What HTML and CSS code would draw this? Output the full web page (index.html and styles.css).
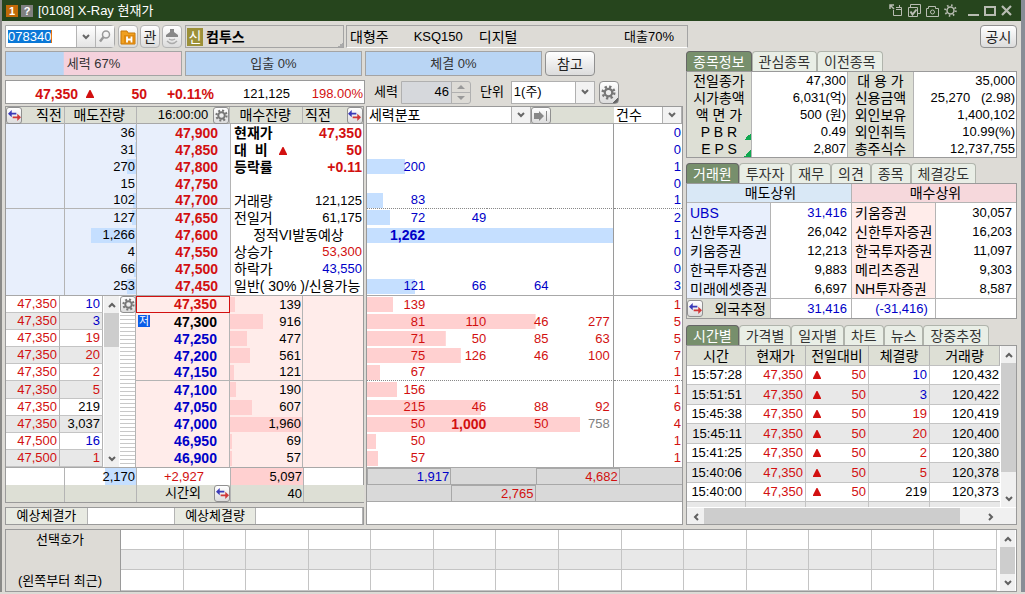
FILE: index.html
```html
<!DOCTYPE html>
<html lang="ko">
<head>
  <meta charset="UTF-8">
  <meta name="viewport" content="width=device-width, initial-scale=1.0">
  <title>[0108] X-Ray 현재가</title>
  <link rel="stylesheet" href="styles.css">
</head>
<body>

<!-- 공용 아이콘 -->
<svg class="defs" width="0" height="0">
  <symbol id="gear" viewBox="0 0 16 16">
    <circle cx="8" cy="8" r="6.2" fill="none" stroke="currentColor" stroke-width="2.6" stroke-dasharray="2.43 2.43"/>
    <circle cx="8" cy="8" r="4" fill="none" stroke="currentColor" stroke-width="2.4"/>
  </symbol>
  <symbol id="swap" viewBox="0 0 14 14">
    <path d="M0 5l4-4v3h5v2H4v3z" fill="#3a3ab8"/>
    <path d="M14 9l-4-4v3H5v2h5v3z" fill="#d03838"/>
  </symbol>
  <symbol id="up" viewBox="0 0 8 6"><path d="M1 5l3-3 3 3" fill="none" stroke="currentColor" stroke-width="2"/></symbol>
  <symbol id="down" viewBox="0 0 8 6"><path d="M1 1l3 3 3-3" fill="none" stroke="currentColor" stroke-width="2"/></symbol>
  <symbol id="left" viewBox="0 0 6 8"><path d="M5 1L2 4l3 3" fill="none" stroke="currentColor" stroke-width="2"/></symbol>
  <symbol id="right" viewBox="0 0 6 8"><path d="M1 1l3 3-3 3" fill="none" stroke="currentColor" stroke-width="2"/></symbol>
  <symbol id="tri" viewBox="0 0 8 8"><path d="M3.500 0h1L8 7v1H0V7z" fill="#d21010"/></symbol>
</svg>

<div class="window">
  <header class="titlebar">
    <span class="badge badge-num">1</span>
    <span class="badge badge-help">?</span>
    <h1>[0108] X-Ray 현재가</h1>
    <div class="win-icons">
      <button type="button" aria-label="분리"><svg width="14" height="13" viewBox="0 0 14 13" fill="none" stroke="currentColor"><path d="M1 5V1h4M1 1l4 4" stroke-width="1.5"/><path d="M4.5 6v5.5h8v-8H7M7 5.500h5M10.500 3V1"/></svg></button>
      <button type="button" aria-label="복사"><svg width="13" height="13" viewBox="0 0 13 13" fill="none" stroke="currentColor"><path d="M2.500 3V.5h10v9H10M.5 3.500h9v9h-9z"/><path d="M2.500 7.500l2 3 4-5" stroke-width="2"/></svg></button>
      <button type="button" aria-label="캡처"><svg width="13" height="12" viewBox="0 0 13 12" fill="none" stroke="currentColor"><path d="M.5 3.500h2V1.500h7v2h3v8H.5z"/><circle cx="6.500" cy="7" r="2"/></svg></button>
      <button type="button" aria-label="설정"><svg width="13" height="13" viewBox="0 0 13 13" fill="none" stroke="currentColor"><circle cx="6.500" cy="6.500" r="3.500" stroke-width="1.500"/><circle cx="6.500" cy="6.500" r="5.300" stroke-width="2" stroke-dasharray="1.500 2.660"/></svg></button>
      <button type="button" class="gap" aria-label="최소화"><svg width="11" height="11" viewBox="0 0 11 11"><path d="M0 9h11v2H0z" fill="currentColor"/></svg></button>
      <button type="button" aria-label="최대화"><svg width="12" height="10" viewBox="0 0 12 10"><path d="M1 1h10v8H1z" fill="none" stroke="currentColor" stroke-width="2"/></svg></button>
      <button type="button" aria-label="닫기"><svg width="11" height="11" viewBox="0 0 11 11"><path d="M1 1l9 9M10 1l-9 9" fill="none" stroke="currentColor" stroke-width="2.200"/></svg></button>
    </div>
  </header>

  <!-- 종목 선택 -->
  <div class="toolbar">
    <div class="code-box">
      <input type="text" value="078340" aria-label="종목코드">
      <button type="button" aria-label="목록"><svg width="8" height="6"><use href="#down"/></svg></button>
      <button type="button" class="search" aria-label="찾기"><svg width="12" height="13" viewBox="0 0 12 13" fill="none" stroke="#999" stroke-width="1.500"><circle cx="7" cy="4.500" r="3.500"/><path d="M4.500 7L1 11.500" stroke-width="2.500"/></svg></button>
    </div>
    <button type="button" class="btn icon" aria-label="보유종목"><svg width="16" height="16" viewBox="0 0 16 16"><path d="M1 2h6l1 2h7v11H1z" fill="#f0a020" stroke="#c87808"/><path d="M4 6h11v9H4z" fill="#e08a10"/><path d="M7 7.500v6M11.500 7.500v6M7 10.500h5" stroke="#fff" stroke-width="1.800" fill="none"/></svg></button>
    <button type="button" class="btn icon">관</button>
    <button type="button" class="btn icon" aria-label="호출"><svg width="14" height="16" viewBox="0 0 14 16"><path d="M5 0h4v3l4 3v2H1V6l4-3z" fill="#888"/><path d="M4 10q3 2 6 0M2 12q5 5 10 0" fill="none" stroke="#aaa" stroke-width="1.500"/></svg></button>
    <div class="stock-name"><span>신</span><b>컴투스</b></div>
    <div class="stock-meta">
      <span>대형주</span><span>KSQ150</span><span>디지털</span><span class="loan">대출70%</span>
    </div>
    <button type="button" class="btn notice">공시</button>
  </div>

  <div class="main">
    <section class="left">
      <div class="power-row">
        <div class="power" style="background-size: 33% 100%">세력 67%</div>
        <div class="power flat">입출 0%</div>
        <div class="power flat">체결 0%</div>
        <button type="button" class="btn ref">참고</button>
      </div>

      <div class="price-row">
        <div class="price-strip">
          <b>47,350</b><svg width="8" height="8"><use href="#tri"/></svg><b>50</b><b>+0.11%</b><span class="black">121,125</span><span>198.00%</span>
        </div>
        <div class="options">
          <label for="power">세력</label>
          <div class="spin">
            <input type="text" id="power" value="46" readonly>
            <div class="spin-btns">
              <button type="button" aria-label="증가"><svg width="8" height="4" viewBox="0 0 8 4"><path d="M0 4l4-4 4 4z" fill="#999"/></svg></button>
              <button type="button" aria-label="감소"><svg width="8" height="4" viewBox="0 0 8 4"><path d="M0 0l4 4 4-4z" fill="#999"/></svg></button>
            </div>
          </div>
          <label for="unit">단위</label>
          <div class="select unit">
            <select id="unit"><option>1(주)</option></select>
            <svg width="8" height="6"><use href="#down"/></svg>
          </div>
          <button type="button" class="btn icon corner" aria-label="설정"><svg width="15" height="15"><use href="#gear"/></svg></button>
        </div>
      </div>

      <div class="panels">
        <div class="quote-col">
          <div class="panel quote">
            <div class="quote-head">
              <div><button type="button" class="btn mini" aria-label="전환"><svg width="13" height="13"><use href="#swap"/></svg></button>직전</div>
              <div class="mid">매도잔량</div>
              <div><span class="num">16:00:00</span><button type="button" class="btn mini" aria-label="설정"><svg width="13" height="13"><use href="#gear"/></svg></button></div>
              <div class="mid">매수잔량</div>
              <div>직전<button type="button" class="btn mini" aria-label="전환"><svg width="13" height="13"><use href="#swap"/></svg></button></div>
            </div>

            <!-- 매도 호가 -->
            <div class="block">
              <table class="book asks">
                <colgroup><col class="c-prev"><col class="c-ask"><col class="c-price"></colgroup>
                <tr><td></td><td class="bar" style="background-size: 1px 15px">36</td><td>47,900</td></tr>
                <tr><td></td><td class="bar" style="background-size: 1px 15px">31</td><td>47,850</td></tr>
                <tr><td></td><td class="bar" style="background-size: 9px 15px">270</td><td>47,800</td></tr>
                <tr><td></td><td class="bar" style="background-size: 0 15px">15</td><td>47,750</td></tr>
                <tr><td></td><td class="bar" style="background-size: 3px 15px">102</td><td>47,700</td></tr>
                <tr><td></td><td class="bar" style="background-size: 4px 15px">127</td><td>47,650</td></tr>
                <tr><td></td><td class="bar" style="background-size: 45px 15px">1,266</td><td>47,600</td></tr>
                <tr><td></td><td class="bar" style="background-size: 0 15px">4</td><td>47,550</td></tr>
                <tr><td></td><td class="bar" style="background-size: 2px 15px">66</td><td>47,500</td></tr>
                <tr><td></td><td class="bar" style="background-size: 9px 15px">253</td><td>47,450</td></tr>
              </table>
              <table class="summary">
                <tr class="strong"><th>현재가</th><td class="red">47,350</td></tr>
                <tr class="strong"><th>대 &nbsp;비 &nbsp;&nbsp;<svg width="8" height="8"><use href="#tri"/></svg></th><td class="red">50</td></tr>
                <tr class="strong"><th>등락률</th><td class="red">+0.11</td></tr>
                <tr><th></th><td></td></tr>
                <tr><th>거래량</th><td>121,125</td></tr>
                <tr><th>전일거</th><td>61,175</td></tr>
                <tr><th colspan="2" class="mid">정적VI발동예상</th></tr>
                <tr><th>상승가</th><td class="red">53,300</td></tr>
                <tr><th>하락가</th><td class="blue">43,550</td></tr>
                <tr><th colspan="2">일반( 30% )/신용가능</th></tr>
              </table>
            </div>

            <!-- 체결 목록과 매수 호가 -->
            <div class="block">
              <div class="ticks">
                <table class="tick-list">
                  <colgroup><col class="c-tick"><col class="c-vol"></colgroup>
                  <tr><td>47,350</td><td class="blue">10</td></tr>
                  <tr><td>47,350</td><td class="blue">3</td></tr>
                  <tr><td>47,350</td><td>19</td></tr>
                  <tr><td>47,350</td><td>20</td></tr>
                  <tr><td>47,350</td><td>2</td></tr>
                  <tr><td>47,350</td><td>5</td></tr>
                  <tr><td>47,350</td><td class="black">219</td></tr>
                  <tr><td>47,350</td><td class="black">3,037</td></tr>
                  <tr><td>47,500</td><td class="blue">16</td></tr>
                  <tr><td>47,500</td><td>1</td></tr>
                </table>
                <div class="vscroll">
                  <button type="button" aria-label="위로"><svg width="8" height="6"><use href="#up"/></svg></button>
                  <div class="track"><div class="thumb" style="height: 25%"></div></div>
                  <button type="button" aria-label="아래로"><svg width="8" height="6"><use href="#down"/></svg></button>
                </div>
                <div class="ladder">
                  <button type="button" class="btn mini" aria-label="설정"><svg width="13" height="13"><use href="#gear"/></svg></button>
                </div>
              </div>
              <table class="book bids">
                <colgroup><col class="c-price"><col class="c-bid"><col class="c-last"></colgroup>
                <tr><td class="now">47,350</td><td class="bar" style="background-size: 5px 15px">139</td><td></td></tr>
                <tr><td class="black"><span class="low">저</span>47,300</td><td class="bar" style="background-size: 33px 15px">916</td><td></td></tr>
                <tr><td>47,250</td><td class="bar" style="background-size: 17px 15px">477</td><td></td></tr>
                <tr><td>47,200</td><td class="bar" style="background-size: 20px 15px">561</td><td></td></tr>
                <tr><td>47,150</td><td class="bar" style="background-size: 4px 15px">121</td><td></td></tr>
                <tr><td>47,100</td><td class="bar" style="background-size: 6px 15px">190</td><td></td></tr>
                <tr><td>47,050</td><td class="bar" style="background-size: 22px 15px">607</td><td></td></tr>
                <tr><td>47,000</td><td class="bar" style="background-size: 100% 15px">1,960</td><td></td></tr>
                <tr><td>46,950</td><td class="bar" style="background-size: 2px 15px">69</td><td></td></tr>
                <tr><td>46,900</td><td class="bar" style="background-size: 2px 15px">57</td><td></td></tr>
              </table>
            </div>

            <table class="totals">
              <colgroup><col class="c-prev"><col class="c-ask"><col class="c-price"><col class="c-bid"><col class="c-last"></colgroup>
              <tr><td></td><td class="sum-ask">2,170</td><td class="diff">+2,927</td><td class="sum-bid">5,097</td><td></td></tr>
              <tr class="after"><td></td><td></td><td class="after-cell"><div class="after-label">시간외<button type="button" class="btn mini" aria-label="전환"><svg width="13" height="13"><use href="#swap"/></svg></button></div></td><td>40</td><td></td></tr>
            </table>
          </div>

          <div class="expected">
            <label for="expPrice">예상체결가</label><input type="text" id="expPrice">
            <label for="expVol">예상체결량</label><input type="text" id="expVol" class="wide-input">
          </div>
        </div>

        <!-- 세력 분포 -->
        <div class="panel dist">
          <div class="dist-head">
            <div class="select kind">
              <select aria-label="분포 종류"><option>세력분포</option></select>
              <svg width="8" height="6"><use href="#down"/></svg>
            </div>
            <button type="button" class="btn mini wide" aria-label="다음"><svg width="13" height="10" viewBox="0 0 13 10"><path d="M0 2h5V0l5 5-5 5V8H0z" fill="#888"/><path d="M12.500 0v10" stroke="#888"/></svg></button>
            <div class="select count">
              <select aria-label="건수"><option>건수</option></select>
              <svg width="8" height="6"><use href="#down"/></svg>
            </div>
          </div>
          <table class="spread sell">
            <colgroup><col class="d1"><col class="d2"><col class="d3"><col class="d4"><col class="d5"></colgroup>
            <tr style="background-size: 0 15px"><td></td><td></td><td></td><td></td><td>0</td></tr>
            <tr style="background-size: 0 15px"><td></td><td></td><td></td><td></td><td>0</td></tr>
            <tr style="background-size: 38px 15px"><td>200</td><td></td><td></td><td></td><td>1</td></tr>
            <tr style="background-size: 0 15px"><td></td><td></td><td></td><td></td><td>0</td></tr>
            <tr style="background-size: 16px 15px"><td>83</td><td></td><td></td><td></td><td>1</td></tr>
            <tr style="background-size: 23px 15px"><td>72</td><td>49</td><td></td><td></td><td>2</td></tr>
            <tr style="background-size: 78% 15px"><td class="big">1,262</td><td></td><td></td><td></td><td>1</td></tr>
            <tr style="background-size: 0 15px"><td></td><td></td><td></td><td></td><td>0</td></tr>
            <tr style="background-size: 0 15px"><td></td><td></td><td></td><td></td><td>0</td></tr>
            <tr style="background-size: 48px 15px"><td>121</td><td>66</td><td>64</td><td></td><td>3</td></tr>
          </table>
          <table class="spread buy">
            <colgroup><col class="d1"><col class="d2"><col class="d3"><col class="d4"><col class="d5"></colgroup>
            <tr style="background-size: 26px 15px"><td>139</td><td></td><td></td><td></td><td>1</td></tr>
            <tr style="background-size: 169px 15px"><td>81</td><td>110</td><td>46</td><td>277</td><td>5</td></tr>
            <tr style="background-size: 79px 15px"><td>71</td><td>50</td><td>85</td><td>63</td><td>5</td></tr>
            <tr style="background-size: 94px 15px"><td>75</td><td>126</td><td>46</td><td>100</td><td>7</td></tr>
            <tr style="background-size: 13px 15px"><td>67</td><td></td><td></td><td></td><td>1</td></tr>
            <tr style="background-size: 30px 15px"><td>156</td><td></td><td></td><td></td><td>1</td></tr>
            <tr style="background-size: 114px 15px"><td>215</td><td>46</td><td>88</td><td>92</td><td>6</td></tr>
            <tr style="background-size: 213px 15px"><td>50</td><td class="big">1,000</td><td>50</td><td class="gray">758</td><td>4</td></tr>
            <tr style="background-size: 9px 15px"><td>50</td><td></td><td></td><td></td><td>1</td></tr>
            <tr style="background-size: 11px 15px"><td>57</td><td></td><td></td><td></td><td>1</td></tr>
          </table>
          <div class="dist-sum">
            <span class="box blue">1,917</span><span></span><span class="box">4,682</span>
          </div>
          <div class="dist-sum">
            <span></span><span class="box">2,765</span>
          </div>
        </div>
      </div>
    </section>

    <section class="right">
      <nav class="tabs">
        <button type="button" class="on">종목정보</button><button type="button">관심종목</button><button type="button">이전종목</button>
      </nav>
      <table class="panel facts">
        <colgroup><col class="f1"><col class="f2"><col class="f3"><col class="f4"></colgroup>
        <tr><th>전일종가</th><td>47,300</td><th>대 용 가</th><td>35,000</td></tr>
        <tr><th>시가총액</th><td>6,031(억)</td><th>신용금액</th><td>25,270 &nbsp;&nbsp;(2.98)</td></tr>
        <tr><th>액 면 가</th><td>500 (원)</td><th>외인보유</th><td>1,400,102</td></tr>
        <tr><th class="more">P B R</th><td>0.49</td><th>외인취득</th><td>10.99(%)</td></tr>
        <tr><th class="more">E P S</th><td>2,807</td><th>총주식수</th><td>12,737,755</td></tr>
      </table>

      <nav class="tabs">
        <button type="button" class="on">거래원</button><button type="button">투자자</button><button type="button">재무</button><button type="button">의견</button><button type="button">종목</button><button type="button">체결강도</button>
      </nav>
      <table class="panel members">
        <colgroup><col class="m1"><col class="m2"><col class="m3"><col class="m4"></colgroup>
        <tr class="head"><th colspan="2">매도상위</th><th colspan="2" class="buy">매수상위</th></tr>
        <tr><th class="blue">UBS</th><td class="blue">31,416</td><th class="buy">키움증권</th><td>30,057</td></tr>
        <tr><th>신한투자증권</th><td>26,042</td><th class="buy">신한투자증권</th><td>16,203</td></tr>
        <tr><th>키움증권</th><td>12,213</td><th class="buy">한국투자증권</th><td>11,097</td></tr>
        <tr><th>한국투자증권</th><td>9,883</td><th class="buy">메리츠증권</th><td>9,303</td></tr>
        <tr><th>미래에셋증권</th><td>6,697</td><th class="buy">NH투자증권</th><td>8,587</td></tr>
        <tr class="foot"><th><span class="foreign"><button type="button" class="btn mini" aria-label="전환"><svg width="13" height="13"><use href="#swap"/></svg></button>외국추정</span></th><td class="blue">31,416</td><td class="blue net">(-31,416)</td><td></td></tr>
      </table>

      <nav class="tabs">
        <button type="button" class="on">시간별</button><button type="button">가격별</button><button type="button">일자별</button><button type="button">차트</button><button type="button">뉴스</button><button type="button">장중추정</button>
      </nav>
      <div class="panel times">
        <div class="times-view">
          <table>
            <colgroup><col class="t1"><col class="t2"><col class="t3"><col class="t4"><col class="t5"></colgroup>
            <tr><th>시간</th><th>현재가</th><th>전일대비</th><th>체결량</th><th>거래량</th></tr>
            <tr><td>15:57:28</td><td>47,350</td><td><svg width="8" height="8"><use href="#tri"/></svg>50</td><td class="blue">10</td><td>120,432</td></tr>
            <tr><td>15:51:51</td><td>47,350</td><td><svg width="8" height="8"><use href="#tri"/></svg>50</td><td class="blue">3</td><td>120,422</td></tr>
            <tr><td>15:45:38</td><td>47,350</td><td><svg width="8" height="8"><use href="#tri"/></svg>50</td><td>19</td><td>120,419</td></tr>
            <tr><td>15:45:11</td><td>47,350</td><td><svg width="8" height="8"><use href="#tri"/></svg>50</td><td>20</td><td>120,400</td></tr>
            <tr><td>15:41:25</td><td>47,350</td><td><svg width="8" height="8"><use href="#tri"/></svg>50</td><td>2</td><td>120,380</td></tr>
            <tr><td>15:40:06</td><td>47,350</td><td><svg width="8" height="8"><use href="#tri"/></svg>50</td><td>5</td><td>120,378</td></tr>
            <tr><td>15:40:00</td><td>47,350</td><td><svg width="8" height="8"><use href="#tri"/></svg>50</td><td class="black">219</td><td>120,373</td></tr>
            <tr class="cut"><td></td><td></td><td></td><td></td><td></td></tr>
          </table>
          <div class="vscroll">
            <button type="button" aria-label="위로"><svg width="8" height="6"><use href="#up"/></svg></button>
            <div class="track"><div class="thumb" style="height: 86%"></div></div>
            <button type="button" aria-label="아래로"><svg width="8" height="6"><use href="#down"/></svg></button>
          </div>
        </div>
        <div class="hscroll">
          <button type="button" aria-label="왼쪽"><svg width="6" height="8"><use href="#left"/></svg></button>
          <div class="track"><div class="thumb" style="width: 92%"></div></div>
          <button type="button" aria-label="오른쪽"><svg width="6" height="8"><use href="#right"/></svg></button>
        </div>
      </div>
    </section>
  </div>

  <!-- 선택 호가 -->
  <div class="panel picks">
    <div class="picks-label"><span>선택호가</span><span>(왼쪽부터 최근)</span></div>
    <table>
      <tr><td></td><td></td><td></td><td></td><td></td><td></td><td></td><td></td><td></td><td></td><td></td><td></td><td></td><td></td></tr>
      <tr><td></td><td></td><td></td><td></td><td></td><td></td><td></td><td></td><td></td><td></td><td></td><td></td><td></td><td></td></tr>
      <tr><td></td><td></td><td></td><td></td><td></td><td></td><td></td><td></td><td></td><td></td><td></td><td></td><td></td><td></td></tr>
    </table>
    <div class="vscroll">
      <button type="button" aria-label="위로"><svg width="8" height="6"><use href="#up"/></svg></button>
      <div class="track"><div class="thumb" style="height: 100%"></div></div>
      <button type="button" aria-label="아래로"><svg width="8" height="6"><use href="#down"/></svg></button>
    </div>
  </div>
</div>

</body>
</html>
```
FILE: styles.css
```css
* {
  box-sizing: border-box;
}
body {
  margin: 0;
  font-family: "Liberation Sans", "Noto Sans CJK KR", sans-serif;
  font-size: 13px;
  line-height: 16px;
  color: #000;
  background: #dddbd6;
}
button, input, select {
  font: inherit;
  color: inherit;
  margin: 0;
  padding: 0;
  border: 0;
  border-radius: 0;
  background: none;
}
svg {
  display: block;
  flex: none;
}
.defs {
  position: absolute;
}
table {
  width: 100%;
  table-layout: fixed;
  border-spacing: 0;
}
th {
  font-size: 14px;
  font-weight: normal;
  padding: 0;
}
td {
  padding: 0;
  text-align: right;
}
.red { color: #d21010; }
.blue { color: #0000c8; }
.black { color: #000; }
.gray { color: #808080; }

.window {
  border-left: 2px solid #8a8a88;
  border-right: 4px solid #888d96;
}
.panel {
  border: 1px solid #9a9a9a;
  background: #fff;
}

/* 제목 표시줄 */
.titlebar {
  display: flex;
  align-items: center;
  gap: 3px;
  height: 21px;
  padding: 0 9px 0 4px;
  background: #26451d;
  color: #fff;
}
.titlebar h1 {
  margin: 0 0 0 2px;
  font-size: 13px;
  font-weight: normal;
}
.badge {
  width: 12px;
  height: 12px;
  line-height: 12px;
  text-align: center;
  font-size: 11px;
  font-weight: bold;
  background: #c06a08;
}
.badge-help {
  background: #808080;
}
.win-icons {
  display: flex;
  align-items: center;
  gap: 5px;
  margin-left: auto;
  color: #b8bcb2;
}
.win-icons .gap {
  margin-left: 6px;
}

/* 버튼 */
.btn {
  display: flex;
  align-items: center;
  justify-content: center;
  border: 1px solid #909090;
  border-radius: 4px;
  background: linear-gradient(#fff, #dcdcdc);
  font-size: 14px;
  color: #222;
}
.icon {
  width: 20px;
  height: 23px;
  color: #777;
}
.corner {
  background: linear-gradient(135deg, transparent 50%, #666 50%) no-repeat right bottom / 5px 5px, linear-gradient(#fff, #dcdcdc);
}
.toolbar .icon {
  border-color: #b4b4b4;
  color: #222;
}
.mini {
  width: 16px;
  height: 17px;
  border-radius: 3px;
  color: #777;
}

/* 종목 선택 */
.toolbar {
  display: flex;
  gap: 2px;
  padding: 4px 4px 0 3px;
}
.code-box {
  display: flex;
  width: 110px;
  height: 23px;
  margin-right: 1px;
  border: 1px solid #a8a8a8;
  border-radius: 0 4px 4px 0;
  background: #fff;
}
.code-box input {
  flex: 1;
  min-width: 0;
  padding-left: 2px;
  color: #fff;
  background: linear-gradient(90deg, #0a78d7 43px, #e07010 43px) no-repeat 2px 4px / 44px 13px;
}
.code-box button {
  display: flex;
  align-items: center;
  justify-content: center;
  width: 19px;
  border-left: 1px solid #b4b4b4;
  background: linear-gradient(#fff, #e4e4e4);
  color: #666;
}
.stock-name {
  display: flex;
  align-items: center;
  width: 159px;
  height: 23px;
  margin-left: 1px;
  border: 1px solid #a4a4a4;
  font-size: 14px;
  background: linear-gradient(135deg, transparent 50%, #aaa 50%) no-repeat right bottom / 5px 5px;
}
.stock-name span {
  width: 16px;
  margin: 0 3px 0 1px;
  line-height: 18px;
  text-align: center;
  color: #fff;
  background: #9c9038;
}
.stock-meta {
  display: flex;
  align-items: center;
  width: 342px;
  height: 23px;
  padding: 0 13px 0 3px;
  border: 1px solid #a4a4a4;
  border-bottom-color: #fff;
}
.stock-meta span {
  margin-right: 16px;
  font-size: 14px;
}
.stock-meta span:first-child {
  margin-right: 25px;
}
.stock-meta span:nth-child(2) {
  font-size: 13px;
}
.stock-meta .loan {
  margin: 0 0 0 auto;
  font-size: 13px;
}
.notice {
  width: 37px;
  height: 23px;
  margin-left: auto;
}

.main {
  display: flex;
  gap: 3px;
  padding: 3px 4px 0 3px;
}
.left {
  flex: 678 1 0;
  min-width: 0;
}
.right {
  flex: 331 1 0;
  min-width: 0;
}

/* 세력, 입출, 체결 막대 */
.power-row {
  display: flex;
  gap: 3px;
}
.power {
  flex: none;
  width: 177px;
  height: 25px;
  line-height: 23px;
  text-align: center;
  border: 1px solid #a4a4a4;
  background: #f5d1dc linear-gradient(#b9d5f4, #b9d5f4) no-repeat;
  color: #333;
}
.flat {
  background: #b9d5f4;
}
.ref {
  width: 50px;
}

.price-row {
  display: flex;
  gap: 9px;
  height: 24px;
  margin: 4px 0 2px;
}
.price-strip {
  display: grid;
  grid-template-columns: 72px 8px 61px 67px 76px 1fr;
  align-items: center;
  width: 360px;
  padding: 3px 1px 0 0;
  border: 1px solid #9a9a9a;
  background: #fff;
  color: #d21010;
  text-align: right;
}
.price-strip svg {
  margin-left: 8px;
}
.price-strip b {
  font-size: 14px;
}
.options {
  display: flex;
  align-items: center;
  gap: 3px;
  font-size: 13px;
}
.spin {
  display: flex;
  width: 70px;
  height: 23px;
  margin-right: 6px;
  border: 1px solid #b0b0b0;
  border-radius: 0 3px 3px 0;
}
.spin input {
  flex: 1;
  min-width: 0;
  padding-right: 2px;
  text-align: right;
  background: #d6d8dc;
}
.spin-btns {
  display: flex;
  flex-direction: column;
  width: 19px;
  border-left: 1px solid #b0b0b0;
}
.spin-btns button {
  display: flex;
  flex: 1;
  align-items: center;
  justify-content: center;
}
.spin-btns button + button {
  border-top: 1px solid #b0b0b0;
}
.select {
  position: relative;
  border: 1px solid #b0b0b0;
}
.select select {
  display: block;
  width: 100%;
  height: 100%;
  padding-left: 2px;
  appearance: none;
  font-size: 14px;
  background: linear-gradient(90deg, #b0b0b0 1px, #f2f2f2 1px) no-repeat right / 19px 100%, #fff;
}
.select svg {
  position: absolute;
  right: 5px;
  top: 50%;
  margin-top: -3px;
  color: #666;
  pointer-events: none;
}
.unit {
  width: 84px;
  height: 23px;
  margin: 0 1px 0 4px;
}
.unit select {
  font-size: 13px;
}

/* 호가창 */
.panels {
  display: flex;
  gap: 2px;
}
.quote-col {
  flex: 360 1 0;
  min-width: 0;
}
.quote-head {
  display: grid;
  grid-template-columns: 59fr 72fr 94fr 73fr 60fr;
  height: 17px;
  border-bottom: 1px solid #a8a8a8;
  background: #dddfd5;
  font-size: 14px;
}
.quote-head div {
  display: flex;
  justify-content: space-between;
  padding-right: 2px;
  border-right: 1px solid #b4b4b4;
}
.quote-head div:nth-child(3) {
  gap: 5px;
  justify-content: flex-end;
  padding: 0;
}
.quote-head .mid {
  justify-content: center;
}
.quote-head div:last-child {
  padding: 0 0 0 2px;
  border: 0;
}
.num {
  font-size: 13px;
}
.block {
  display: flex;
  height: 172px;
  border-bottom: 1px solid #a8a8a8;
}
.c-prev { width: 59px; }
.c-ask { width: 72px; }
.c-price { width: 94px; }
.c-bid { width: 73px; }
.c-last { width: 60px; }
.book td {
  height: 17px;
  padding-right: 1px;
  border-right: 1px solid #b4b4b4;
}
.book tr:nth-child(5) td {
  border-bottom: 1px solid #b4b4b4;
}
.asks {
  flex: 225 1 0;
  background: #e8effc;
}
.asks .bar {
  background: linear-gradient(#c5dfff, #c5dfff) no-repeat right 1px;
}
.asks td:last-child {
  padding-right: 12px;
  font-size: 14px;
  font-weight: bold;
  color: #d21010;
}
.bids {
  flex: 227 1 0;
  background: #ffecea;
}
.bids .bar {
  background: linear-gradient(#ffd0d0, #ffd0d0) no-repeat left 1px;
}
.bids td:first-child {
  position: relative;
  padding-right: 12px;
  font-size: 14px;
  font-weight: bold;
  color: #0000c8;
}
.bids td:last-child {
  border-right: 0;
}
.bids td.now {
  border: 1px solid #d21010;
  line-height: 15px;
  color: #d21010;
}
.bids td.black {
  color: #000;
}
.low {
  position: absolute;
  left: 2px;
  top: 2px;
  width: 12px;
  height: 12px;
  line-height: 12px;
  text-align: center;
  font-size: 11px;
  font-weight: normal;
  color: #fff;
  background: #0a5ce8;
}
.summary {
  flex: 133 1 0;
  table-layout: auto;
}
.summary th {
  height: 17px;
  padding-left: 3px;
  text-align: left;
  white-space: nowrap;
}
.summary td {
  padding-right: 1px;
}
.summary svg {
  display: inline-block;
}
.summary .mid {
  text-align: center;
}
.summary .strong th,
.summary .strong td {
  font-size: 14px;
  font-weight: bold;
}
.ticks {
  display: flex;
  flex: 131 1 0;
  min-width: 0;
}
.tick-list {
  flex: 98 1 0;
}
.c-tick { width: 54px; }
.c-vol { width: 43px; }
.tick-list td {
  height: 17px;
  padding-right: 2px;
  border-right: 1px solid #b4b4b4;
  border-bottom: 1px solid #c4c4c4;
  color: #d21010;
}
.tick-list td.blue { color: #0000c8; }
.tick-list td.black { color: #000; }
.tick-list tr:nth-child(even) {
  background: #e8e8e8;
}
.ladder {
  width: 16px;
  border-right: 1px solid #b4b4b4;
  background: repeating-linear-gradient(#fff 0 3px, #c8c8c8 3px 4px);
}
.totals td {
  height: 17px;
  padding-right: 1px;
  border-right: 1px solid #b4b4b4;
}
.totals td:last-child {
  border-right: 0;
}
.totals .sum-ask {
  background: linear-gradient(#c5dfff, #c5dfff) no-repeat right / 31px 100%;
}
.totals .diff {
  padding-right: 26px;
  color: #d21010;
}
.totals .sum-bid {
  background: #ffd0d0;
}
.after {
  background: #dddfd5;
}
.totals .after-cell {
  padding: 0;
}
.after-label {
  display: flex;
  justify-content: flex-end;
  gap: 13px;
}
.expected {
  display: flex;
  height: 18px;
  margin-top: 4px;
  border: 1px solid #9a9a9a;
  background: #fff;
}
.expected label {
  flex: 82 1 0;
  text-align: center;
  border-right: 1px solid #b4b4b4;
  background: #e8eae2;
}
.expected input {
  flex: 87 1 0;
  min-width: 0;
  border-right: 1px solid #b4b4b4;
}
.expected .wide-input {
  flex-grow: 107;
}

/* 세력 분포 */
.dist {
  flex: 316 1 0;
  min-width: 0;
}
.dist-head {
  display: flex;
  height: 17px;
  border-bottom: 1px solid #a8a8a8;
  background: #dddfd5;
}
.dist-head .select {
  border-width: 0 1px 0 0;
}
.kind {
  width: 164px;
}
.count {
  width: 68px;
  margin-left: auto;
}
.wide {
  width: 20px;
}
.d1 { width: 59px; }
.d2 { width: 61px; }
.d3 { width: 62px; }
.d4 { width: 64px; }
.d5 { width: 68px; }
.spread {
  height: 172px;
  border-bottom: 1px solid #a8a8a8;
}
.spread tr {
  background: linear-gradient(#c5dfff, #c5dfff) no-repeat left 1px;
}
.spread td {
  height: 17px;
  padding-right: 1px;
  color: #0000c8;
}
.spread td:nth-child(4) {
  padding-right: 3px;
  border-right: 1px solid #9a9a9a;
}
.spread tr:nth-child(5) td {
  border-bottom: 1px dotted #888;
}
.spread .big {
  font-size: 14px;
  font-weight: bold;
}
.buy tr {
  background-image: linear-gradient(#ffd0d0, #ffd0d0);
}
.buy td {
  color: #d21010;
}
.buy td.gray {
  color: #808080;
}
.dist-sum {
  display: grid;
  grid-template-columns: 84fr 84fr 84fr 62fr;
  height: 17px;
  border-bottom: 1px solid #a8a8a8;
  background: #d9d9d9;
  text-align: right;
  color: #d21010;
}
.box {
  height: 17px;
  padding-right: 1px;
  border: 1px solid #a8a8a8;
}
.box.blue {
  color: #0000c8;
}

/* 오른쪽 탭 */
.tabs {
  display: flex;
  height: 20px;
}
.tabs button {
  padding: 0 6px;
  font-size: 14px;
  line-height: 18px;
  color: #333;
  border: 1px solid #b0b4ac;
  border-bottom: 0;
  border-radius: 4px 4px 0 0;
  background: #e9eee6;
}
.tabs .on {
  color: #fff;
  border-color: #666;
  background: #778f6c;
}

.facts {
  margin-bottom: 5px;
}
.f1 { width: 65px; }
.f2 { width: 96px; }
.f3 { width: 66px; }
.f4 { width: 102px; }
.facts th,
.facts td {
  height: 17px;
  border-right: 1px solid #b4b4b4;
}
.facts th {
  background: #dddfd5;
}
.facts td:last-child {
  border-right: 0;
}
.facts td {
  padding-right: 1px;
}
.facts .more {
  background: linear-gradient(135deg, transparent 50%, #10a850 50%) no-repeat right bottom / 7px 7px, #dddfd5;
}

.members {
  margin-bottom: 6px;
}
.m1 { width: 84px; }
.m2 { width: 81px; }
.m3 { width: 84px; }
.m4 { width: 80px; }
.members th,
.members td {
  height: 19px;
  border-right: 1px solid #b4b4b4;
}
.members th {
  padding-left: 3px;
  text-align: left;
  white-space: nowrap;
  background: #e8effc;
}
.members th.buy {
  background: #ffecea;
}
.members td {
  padding-right: 4px;
}
.members td:last-child,
.members .head th:last-child {
  border-right: 0;
}
.members .head th {
  text-align: center;
  border-bottom: 1px solid #b4b4b4;
  background: #d9e8f6;
}
.members .head th.buy {
  background: #f6d8dc;
}
.members .foot th,
.members .foot td {
  height: 20px;
  border-top: 1px solid #b4b4b4;
}
.members .foot th {
  padding-left: 0;
  background: #dddfd5;
}
.foreign {
  display: flex;
  justify-content: space-between;
  align-items: center;
  padding-right: 4px;
}
.members .net {
  text-align: center;
  padding-left: 20px;
}

.times-view {
  display: flex;
  height: 161px;
  overflow: hidden;
}
.times table {
  flex: 1;
  min-width: 0;
}
.t1 { width: 59px; }
.t2 { width: 60px; }
.t3 { width: 63px; }
.t4 { width: 61px; }
.t5 { width: 70px; }
.times th {
  height: 20px;
  border-right: 1px solid #b4b4b4;
  border-bottom: 1px solid #c0c0c0;
  background: #dddfd5;
}
.times td {
  height: 19px;
  padding-right: 2px;
  border-right: 1px solid #c4c4c4;
  border-bottom: 1px solid #c4c4c4;
  color: #d21010;
}
.times tr:nth-child(odd) td {
  height: 20px;
  background: #e8e8e8;
}
.times .cut td {
  height: 19px;
}
.times td:first-child {
  padding-right: 3px;
  color: #000;
}
.times td:last-child {
  padding-right: 1px;
  border-right: 0;
  color: #000;
}
.times td.blue { color: #0000c8; }
.times td.black { color: #000; }
.times td svg {
  float: left;
  margin: 4px 0 0 7px;
}

/* 스크롤바 */
.vscroll,
.hscroll {
  display: flex;
  flex: none;
  background: #f0f0f0;
  color: #606060;
}
.vscroll {
  flex-direction: column;
  width: 17px;
  border-left: 1px solid #fff;
  border-right: 1px solid #fff;
}
.hscroll {
  height: 17px;
  padding-right: 17px;
  border-top: 1px solid #fff;
}
.vscroll button,
.hscroll button {
  display: flex;
  flex: none;
  align-items: center;
  justify-content: center;
  width: 17px;
  height: 17px;
}
.vscroll button {
  width: 15px;
}
.track {
  flex: 1;
  min-height: 0;
}
.thumb {
  height: 100%;
  background: #cdcdcd;
}

/* 선택 호가 */
.picks {
  display: flex;
  margin: 4px 4px 0 3px;
}
.picks-label {
  display: flex;
  flex: none;
  flex-direction: column;
  justify-content: space-between;
  align-items: center;
  width: 115px;
  padding: 2px 6px 2px 0;
  border-right: 1px solid #9a9a9a;
  background: #dddbd6;
}
.picks table {
  flex: 1;
  min-width: 0;
  margin-right: 2px;
}
.picks td {
  height: 20px;
  border-right: 1px solid #c4c4c4;
  border-bottom: 1px solid #c4c4c4;
}
.picks tr:nth-child(2) {
  background: #e8e8e8;
}
.picks tr:nth-child(3) td {
  height: 21px;
}
```
